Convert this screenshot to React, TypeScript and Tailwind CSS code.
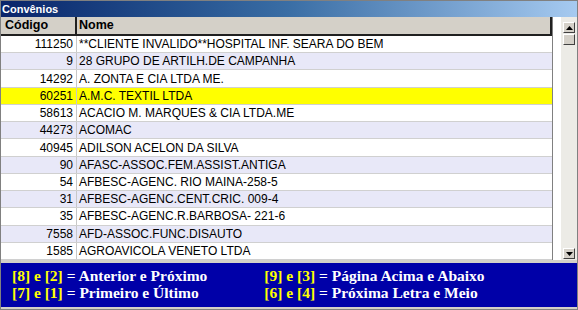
import React from "react";

const rows: [string, string][] = [
  ["111250", "**CLIENTE INVALIDO**HOSPITAL INF. SEARA DO BEM"],
  ["9", "28 GRUPO DE ARTILH.DE CAMPANHA"],
  ["14292", "A. ZONTA E CIA LTDA ME."],
  ["60251", "A.M.C. TEXTIL LTDA"],
  ["58613", "ACACIO M. MARQUES & CIA LTDA.ME"],
  ["44273", "ACOMAC"],
  ["40945", "ADILSON ACELON DA SILVA"],
  ["90", "AFASC-ASSOC.FEM.ASSIST.ANTIGA"],
  ["54", "AFBESC-AGENC. RIO MAINA-258-5"],
  ["31", "AFBESC-AGENC.CENT.CRIC. 009-4"],
  ["35", "AFBESC-AGENC.R.BARBOSA- 221-6"],
  ["7558", "AFD-ASSOC.FUNC.DISAUTO"],
  ["1585", "AGROAVICOLA VENETO LTDA"],
];

const selected = 3;

function Arrow({ down }: { down?: boolean }) {
  return (
    <div className="w-[12px] h-[11px] bg-[#d4d0c8] border border-t-white border-l-white border-r-[#404040] border-b-[#404040] flex items-center justify-center">
      <svg width="7" height="4" viewBox="0 0 7 4">
        {down ? <path d="M0 0h7L3.5 4z" fill="#000" /> : <path d="M0 4h7L3.5 0z" fill="#000" />}
      </svg>
    </div>
  );
}

function Keys({ k, label }: { k: string; label: string }) {
  return (
    <div className="whitespace-nowrap">
      <span className="text-[#ffff00]">{k}</span>
      <span className="text-white"> = {label}</span>
    </div>
  );
}

export default function App() {
  return (
    <div className="w-[578px] h-[310px] bg-[#d4d0c8] border border-[#808080] flex flex-col font-['Liberation_Sans',Arial,sans-serif] overflow-hidden">
      {/* title bar */}
      <div className="h-[16px] shrink-0 bg-gradient-to-r from-[#0a246a] via-[#3a6ea5] to-[#a6caf0] flex items-center px-[1px]">
        <span className="text-white font-bold text-[11px] leading-none">Convênios</span>
      </div>

      <div className="flex flex-1 bg-white min-h-0">
        {/* table */}
        <div className="w-[552px] flex flex-col border-r border-[#808080] min-h-0">
          <div className="h-[19px] shrink-0 flex bg-[#d4d0c8] border-b-2 border-[#202020] text-[12.5px] font-bold text-black leading-none">
            <div className="w-[76px] border-r-2 border-[#202020] flex items-center pl-[4px]">Código</div>
            <div className="flex-1 flex items-center pl-[2px] border-r-2 border-[#202020]">Nome</div>
          </div>
          <div className="flex flex-col flex-1 min-h-0">
            {rows.map(([code, name], i) => (
              <div
                key={code}
                className={
                  "flex-1 min-h-0 flex items-center text-[12px] leading-[14px] text-black border-b border-[#d0d0d0] " +
                  (i === selected ? "bg-[#ffff00]" : i % 2 === 1 ? "bg-[#e8e8f8]" : "bg-white")
                }
              >
                <div className="w-[76px] h-full flex items-center justify-end pr-[3px] border-r border-[#c8c8c8]">
                  {code}
                </div>
                <div className="flex-1 pl-[2px]">{name}</div>
              </div>
            ))}
          </div>
        </div>
        {/* scrollbar */}
        <div className="w-[8px] bg-white" />
        <div className="flex-1 bg-[#ecebe6] flex flex-col items-center justify-between pt-[5px] pb-[1px]">
          <div className="flex flex-col">
            <Arrow />
            <div className="w-[12px] h-[11px] mt-[1px] bg-[#d4d0c8] border border-t-white border-l-white border-r-[#404040] border-b-[#404040]" />
          </div>
          <Arrow down />
        </div>
      </div>

      {/* footer */}
      <div className="shrink-0 pt-[3px] pb-[2px] bg-[#d4d0c8]">
        <div className="h-[44px] bg-[#0000a8] flex gap-[57px] pl-[11px] pt-[4px] font-['Liberation_Serif','Times_New_Roman',serif] font-bold text-[15.5px] leading-[17px]">
          <div className="flex flex-col">
            <Keys k="[8] e [2]" label="Anterior e Próximo" />
            <Keys k="[7] e [1]" label="Primeiro e Último" />
          </div>
          <div className="flex flex-col">
            <Keys k="[9] e [3]" label="Página Acima e Abaixo" />
            <Keys k="[6] e [4]" label="Próxima Letra e Meio" />
          </div>
        </div>
      </div>
    </div>
  );
}
